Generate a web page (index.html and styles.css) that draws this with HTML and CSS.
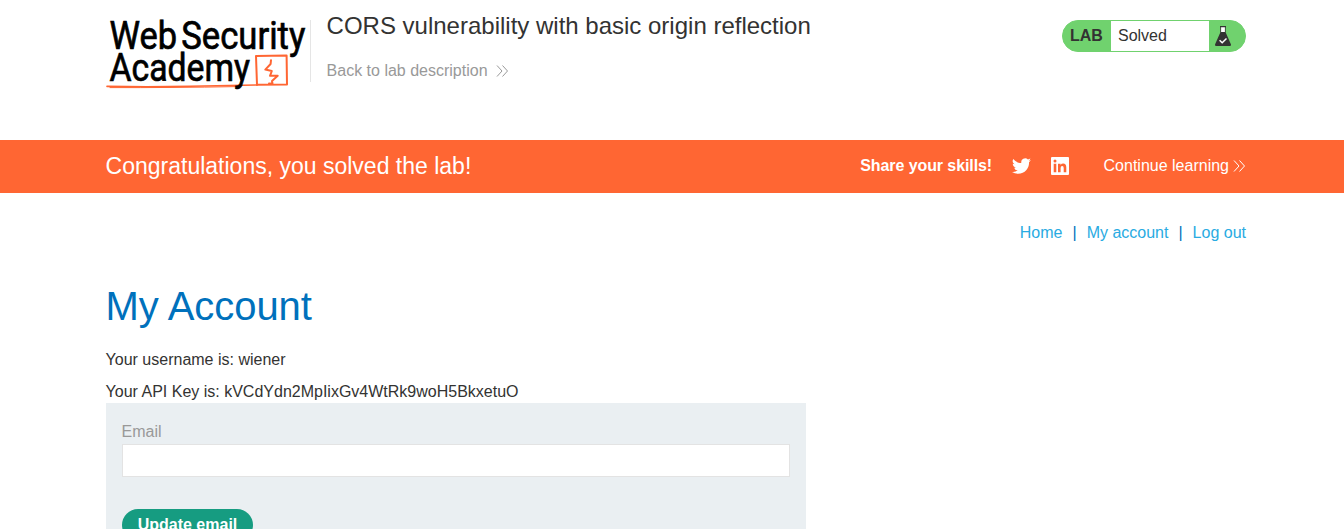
FILE: index.html
```html
<!DOCTYPE html>
<html lang="en">
<head>
<meta charset="utf-8">
<title>CORS vulnerability with basic origin reflection</title>
<link rel="stylesheet" href="styles.css">
</head>
<body>
<header class="lab-header container">
  <svg class="logo" width="200" height="70" viewBox="106 20 200 70" role="img">
    <g class="logo-lines">
      <path class="thick" d="M107 86.4Q150 87.2 190 86.3T257 85"/>
      <path class="thin" d="M110 87.6Q170 87.8 238 86.6"/>
      <path class="box" d="M257 85L256 56L286.6 55.6L287 84.5L257.5 84.8"/>
      <path class="bolt" d="M271 60.2L270.6 64L265.3 69.6L271.8 71L270 75.8L277.7 75.8L272 81L272.5 83.8L269 83.6"/>
    </g>
    <g class="logo-text">
      <text x="109.5" y="48.5" textLength="67.5" lengthAdjust="spacingAndGlyphs">Web</text>
      <text x="181.3" y="48.5" textLength="124" lengthAdjust="spacingAndGlyphs">Security</text>
      <text x="109.5" y="80.8" textLength="140.5" lengthAdjust="spacingAndGlyphs">Academy</text>
    </g>
  </svg>
  <div class="lab-title">
    <h2>CORS vulnerability with basic origin reflection</h2>
    <a class="back">Back to lab description
      <svg width="13" height="12" viewBox="0 0 13 12"><path d="M1 .5L6 6L1 11.5M6.5 .5L11.5 6L6.5 11.5"/></svg>
    </a>
  </div>
  <div class="lab-status">
    <span class="lab-label">LAB</span>
    <span class="lab-state">Solved</span>
    <svg class="flask" width="16" height="21" viewBox="0 0 16 21">
      <path class="glass" d="M6 1H10V6.5H6Z"/>
      <path class="solid" d="M5 0H11V1.2H5ZM5.3 1H6.1V6H9.9V1H10.7V6.5L16 18.5Q16 20 15 20H1Q0 20 0 18.5L5.3 6.5Z"/>
      <path class="tick" d="M4.6 14.2L7.2 16.8L11.5 12.5"/>
    </svg>
  </div>
</header>
<section class="banner">
  <div class="container banner-row">
    <h3>Congratulations, you solved the lab!</h3>
    <div class="share">
      <b>Share your skills!</b>
      <svg class="twitter" width="19" height="16" viewBox="0 2.2 24 19.6"><path d="M23.95 4.57a10 10 0 0 1-2.82.77 4.96 4.96 0 0 0 2.16-2.72c-.95.55-2 .95-3.13 1.18a4.92 4.92 0 0 0-8.38 4.48C7.69 8.1 4.07 6.13 1.64 3.16a4.93 4.93 0 0 0 1.52 6.57 4.9 4.9 0 0 1-2.23-.61v.06c0 2.38 1.7 4.37 3.95 4.83a5 5 0 0 1-2.21.08 4.94 4.94 0 0 0 4.6 3.42A9.87 9.87 0 0 1 0 19.54a13.99 13.99 0 0 0 7.55 2.21c9.05 0 14-7.5 14-13.98 0-.21 0-.42-.02-.63a9.94 9.94 0 0 0 2.42-2.57z"/></svg>
      <svg class="linkedin" width="18" height="18" viewBox="0 0 18 18"><path fill-rule="evenodd" d="M1 0H17Q18 0 18 1V17Q18 18 17 18H1Q0 18 0 17V1Q0 0 1 0ZM2.7 6.8V15.2H5.3V6.8ZM4 2.6A1.5 1.5 0 1 0 4 5.6A1.5 1.5 0 1 0 4 2.6ZM7 6.8V15.2H9.6V11Q9.6 9 11.2 9Q12.7 9 12.7 11V15.2H15.3V10.5Q15.3 6.6 12.2 6.6Q10.4 6.6 9.6 7.9V6.8Z"/></svg>
      <a class="continue">Continue learning
        <svg width="13" height="12" viewBox="0 0 13 12"><path d="M1 .5L6 6L1 11.5M6.5 .5L11.5 6L6.5 11.5"/></svg>
      </a>
    </div>
  </div>
</section>
<main class="container">
  <nav class="account-nav"><a>Home</a><span>|</span><a>My account</a><span>|</span><a>Log out</a></nav>
  <h1>My Account</h1>
  <p>Your username is: wiener</p>
  <p>Your API Key is: kVCdYdn2MpIixGv4WtRk9woH5BkxetuO</p>
  <form class="email-form">
    <label for="email">Email</label>
    <input id="email" type="email">
    <button type="button">Update email</button>
  </form>
</main>
</body>
</html>
```
FILE: styles.css
```css
* { box-sizing: border-box; }
html { overflow: hidden; }
body {
  margin: 0;
  height: 529px;
  overflow: hidden;
  background: #fff;
  color: #333332;
  font: 16px/20px "Liberation Sans", Arial, sans-serif;
}
h1, h2, h3, p { margin: 0; font-weight: 400; }
.container { width: 1140.4px; margin-left: 105.6px; }

.lab-header { display: flex; align-items: flex-start; height: 140px; padding-top: 20px; }
.logo { display: block; flex: none; overflow: visible; margin-left: .4px; }
.logo-text { font: 400 38px/1 Roboto, sans-serif; fill: #000; stroke: #000; stroke-width: .7; }
.logo-lines { fill: none; stroke: #ff6633; stroke-linejoin: round; stroke-linecap: round; }
.thick { stroke-width: 1.6; }
.thin { stroke-width: 1; }
.box { stroke-width: 2; }
.bolt { stroke-width: 2; }
.lab-title { margin-left: 4px; padding-left: 15.6px; height: 62px; border-left: 1px solid #e5e5e5; }
.lab-title h2 { font-size: 24px; line-height: 28px; margin-top: -8px; }
.back { display: flex; align-items: center; gap: 8px; margin-top: 21px; color: #999; }
.back svg, .continue svg { fill: none; stroke: currentColor; stroke-width: 1; }

.lab-status {
  display: flex; align-items: center; width: 184px; height: 32px; margin-left: auto;
  background: #70d26e; border: 1px solid #70d26e; border-radius: 16px;
}
.lab-label { width: 48px; padding-left: 7px; font-weight: 700; }
.lab-state { width: 98px; height: 30px; padding-left: 7px; background: #fff; line-height: 29px; }
.flask { margin-left: 6px; }
.glass { fill: #fff; }
.solid { fill: #333332; }
.tick { fill: none; stroke: #fff; stroke-width: 1.5; }

.banner { height: 53px; background: #ff6633; color: #fff; }
.banner-row { display: flex; align-items: center; justify-content: space-between; height: 52px; }
.banner h3 { font-size: 23px; line-height: 28px; }
.share { display: flex; align-items: center; }
.share b { letter-spacing: -.09px; }
.twitter { margin-left: 20px; fill: #fff; }
.linkedin { margin-left: 20px; fill: #fff; }
.continue { display: flex; align-items: center; gap: 4px; margin-left: 34.5px; }

.account-nav { display: flex; justify-content: flex-end; gap: 10px; padding-top: 30px; color: #0071bc; }
.account-nav a { color: #29abe2; }
h1 { margin: 40px 0 21px; color: #0071bc; font-size: 40px; line-height: 46px; letter-spacing: -.05px; }
p + p { margin-top: 12px; }
.email-form { display: flex; flex-direction: column; align-items: flex-start; width: 700px; height: 126px; overflow: hidden; margin: 1px 0 0 .4px; padding: 19px 16px 0; background: #eaeff2; }
.email-form label { color: #999; margin-left: -.4px; }
.email-form input { width: 668px; height: 33px; margin-top: 2px; border: 1px solid #e3e3e3; background: #fff; flex: none; }
.email-form button { width: 131px; height: 32px; margin-top: 32px; padding: 0; border: 0; border-radius: 16px; background: #169c81; color: #fff; font: 700 16px/30px "Liberation Sans", Arial, sans-serif; flex: none; }
```
